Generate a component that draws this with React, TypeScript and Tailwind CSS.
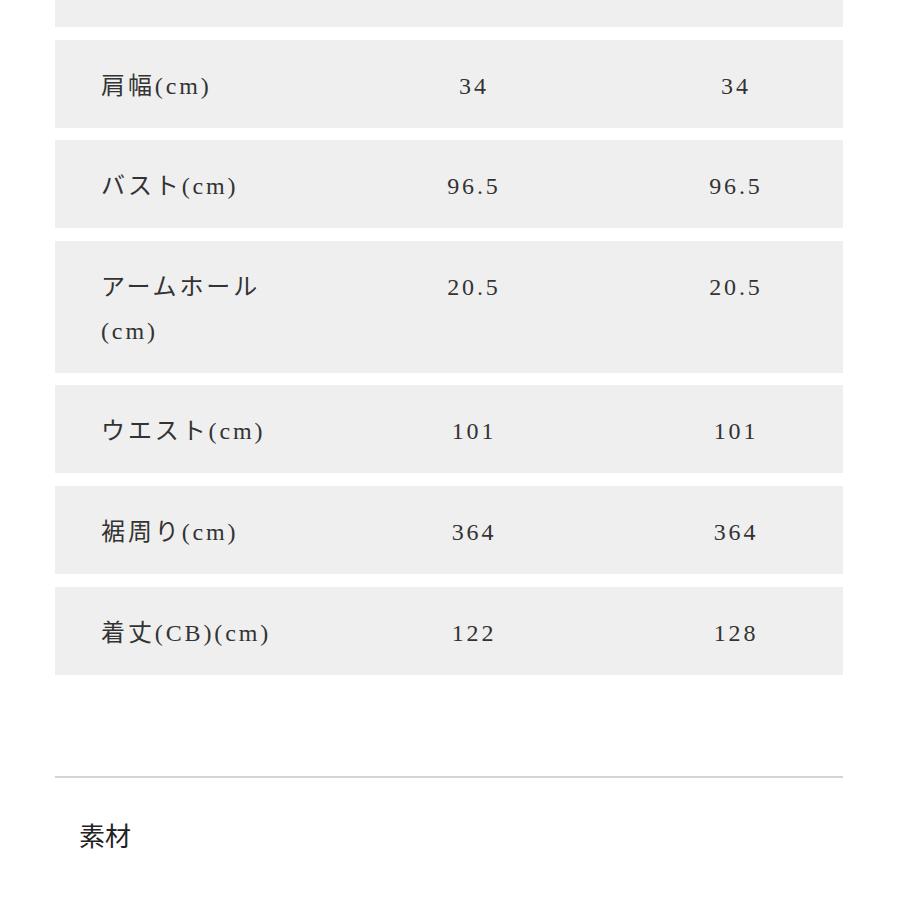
import React from "react";

type SizeRow = {
  label: React.ReactNode;
  a: string;
  b: string;
};

const rows: SizeRow[] = [
  { label: "肩幅(cm)", a: "34", b: "34" },
  { label: "バスト(cm)", a: "96.5", b: "96.5" },
  {
    label: (
      <>
        アームホール
        <br />
        (cm)
      </>
    ),
    a: "20.5",
    b: "20.5",
  },
  { label: "ウエスト(cm)", a: "101", b: "101" },
  { label: "裾周り(cm)", a: "364", b: "364" },
  { label: "着丈(CB)(cm)", a: "122", b: "128" },
];

const fontStack = {
  fontFamily: '"Liberation Serif", "Noto Sans CJK JP", serif',
};

export default function App() {
  return (
    <div className="min-h-[900px] w-[900px] bg-white text-[#333]" style={fontStack}>
      <div className="ml-[55px] mr-[57px] flex flex-col gap-[12.6px]">
        <div className="h-[27px] bg-[#efefef]" />
        {rows.map((row, i) => (
          <div
            key={i}
            className="grid grid-cols-[290px_258px_1fr] items-start bg-[#efefef] pt-[24px] pb-[20px] text-[24px] leading-[44px] tracking-[0.12em]"
          >
            <div className="pl-[46px]">{row.label}</div>
            <div className="text-center">{row.a}</div>
            <div className="pl-[26px] text-center">{row.b}</div>
          </div>
        ))}
      </div>

      <div className="ml-[55px] mr-[57px] mt-[101px] h-[2px] bg-[#d4d4d4]" />

      <div
        className="mt-[41px] pl-[79px] text-[26px] leading-[32px] text-[#222]"
        style={{ fontFamily: '"Noto Sans CJK JP", sans-serif' }}
      >
        素材
      </div>
    </div>
  );
}
